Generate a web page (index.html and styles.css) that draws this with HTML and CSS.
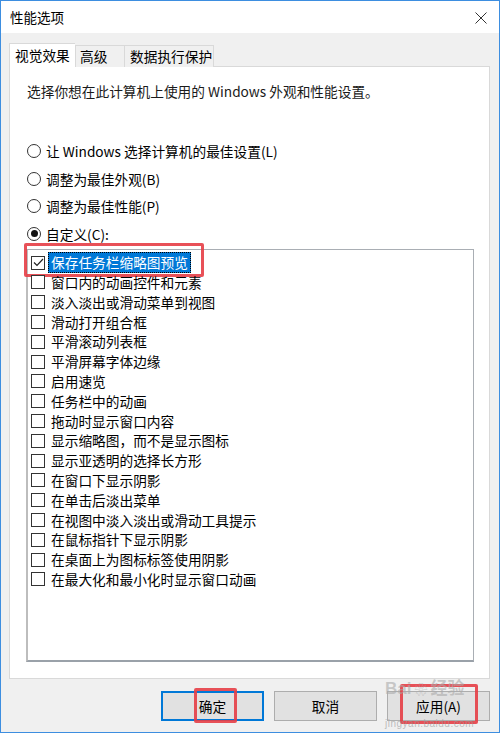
FILE: index.html
```html
<!DOCTYPE html>
<html lang="zh-CN">
<head>
<meta charset="utf-8">
<title>性能选项</title>
<link rel="stylesheet" href="styles.css">
</head>
<body>
<div class="window">
  <div class="titlebar">
    <span class="title">性能选项</span>
    <svg class="close" width="12" height="12" viewBox="0 0 12 12"><path d="M0.5 0.5 L11.5 11.5 M11.5 0.5 L0.5 11.5" stroke="#333" stroke-width="1" fill="none"/></svg>
  </div>
  <div class="body">
    <div class="tabs">
      <div class="tab active">视觉效果</div>
      <div class="tab tab-adv">高级</div>
      <div class="tab tab-dep">数据执行保护</div>
    </div>
    <div class="panel">
      <p class="desc">选择你想在此计算机上使用的 Windows 外观和性能设置。</p>
      <div class="radios">
        <div class="radio-row"><span class="radio"></span><span>让 Windows 选择计算机的最佳设置(L)</span></div>
        <div class="radio-row"><span class="radio"></span><span>调整为最佳外观(B)</span></div>
        <div class="radio-row"><span class="radio"></span><span>调整为最佳性能(P)</span></div>
        <div class="radio-row"><span class="radio on"></span><span>自定义(C):</span></div>
      </div>
      <div class="list">
        <div class="row first"><span class="cb checked"><svg width="11" height="11" viewBox="0 0 11 11"><path d="M1 5.5 L4 8.5 L10 2" stroke="#222" stroke-width="1.2" fill="none"/></svg></span><span class="lbl sel">保存任务栏缩略图预览</span>
          <div class="redbox"></div>
        </div>
        <div class="row"><span class="cb"></span><span class="lbl">窗口内的动画控件和元素</span></div>
        <div class="row"><span class="cb"></span><span class="lbl">淡入淡出或滑动菜单到视图</span></div>
        <div class="row"><span class="cb"></span><span class="lbl">滑动打开组合框</span></div>
        <div class="row"><span class="cb"></span><span class="lbl">平滑滚动列表框</span></div>
        <div class="row"><span class="cb"></span><span class="lbl">平滑屏幕字体边缘</span></div>
        <div class="row"><span class="cb"></span><span class="lbl">启用速览</span></div>
        <div class="row"><span class="cb"></span><span class="lbl">任务栏中的动画</span></div>
        <div class="row"><span class="cb"></span><span class="lbl">拖动时显示窗口内容</span></div>
        <div class="row"><span class="cb"></span><span class="lbl">显示缩略图，而不是显示图标</span></div>
        <div class="row"><span class="cb"></span><span class="lbl">显示亚透明的选择长方形</span></div>
        <div class="row"><span class="cb"></span><span class="lbl">在窗口下显示阴影</span></div>
        <div class="row"><span class="cb"></span><span class="lbl">在单击后淡出菜单</span></div>
        <div class="row"><span class="cb"></span><span class="lbl">在视图中淡入淡出或滑动工具提示</span></div>
        <div class="row"><span class="cb"></span><span class="lbl">在鼠标指针下显示阴影</span></div>
        <div class="row"><span class="cb"></span><span class="lbl">在桌面上为图标标签使用阴影</span></div>
        <div class="row"><span class="cb"></span><span class="lbl">在最大化和最小化时显示窗口动画</span></div>
      </div>
    </div>
    <div class="buttons">
      <button class="btn default">确定<span class="redbox-ok"></span></button>
      <button class="btn">取消</button>
      <button class="btn">应用(A)<span class="redbox-apply"></span></button>
    </div>
  </div>
  <div class="watermark">
    <div class="wm-top">Bai<span class="paw">❀</span>经验</div>
    <div class="wm-bot">jingyan.baidu.com</div>
  </div>
</div>
</body>
</html>
```

FILE: styles.css
```css
* { box-sizing: border-box; }
html, body { margin: 0; padding: 0; }
body {
  width: 500px;
  height: 733px;
  font-family: "Noto Sans CJK SC", "Noto Sans", sans-serif;
  font-size: 13.7px;
  color: #000;
  background: #f0f0f0;
}
.window {
  position: relative;
  width: 500px;
  height: 733px;
  border: 1px solid #3d8ee0;
  background: #f0f0f0;
  display: flex;
  flex-direction: column;
}
.titlebar {
  height: 32px;
  background: #fff;
  display: flex;
  align-items: center;
  justify-content: space-between;
  padding: 0 12px 0 9px;
  flex-shrink: 0;
}
.title { font-size: 13.5px; line-height: 1; margin-top: 1px; }
.close { display: block; margin-top: 1px; }
.body {
  padding: 10px 9px 0 8px;
  display: flex;
  flex-direction: column;
}
.tabs {
  display: flex;
  align-items: flex-end;
  height: 24px;
  position: relative;
  z-index: 2;
  margin-bottom: -1px;
}
.tab {
  height: 22px;
  line-height: 20px;
  border: 1px solid #d9d9d9;
  border-bottom: none;
  background: #f0f0f0;
  padding: 0 5px;
  white-space: nowrap;
}
.tab.active {
  height: 25px;
  background: #fff;
  margin-bottom: -1px;
  line-height: 23px;
  width: 66px;
  border-right: none;
}
.tab-adv { width: 49px; padding-left: 4px; border-right: none; }
.tab-dep { width: 90px; padding-left: 5px; }
.panel {
  height: 613px;
  width: 481px;
  background: #fff;
  border: 1px solid #d9d9d9;
  padding: 0 15px 0 16px;
  display: flex;
  flex-direction: column;
}
.desc {
  margin: 14px 0 0 1px;
  line-height: 20px;
  color: #1a1a1a;
}
.radios { margin-top: 36px; }
.radio-row {
  height: 27.7px;
  display: flex;
  align-items: center;
  margin-left: 1px;
}
.radio {
  width: 14px;
  height: 14px;
  border: 1px solid #333;
  border-radius: 50%;
  margin-right: 5px;
  display: flex;
  align-items: center;
  justify-content: center;
  background: #fff;
}
.radio.on::after {
  content: "";
  width: 7px;
  height: 7px;
  border-radius: 50%;
  background: #111;
}
.list {
  margin-top: 1px;
  height: 413px;
  width: 448px;
  border: 1px solid #a9aeb4;
  border-left: 2px solid #bdbdbd;
  border-bottom: 2px solid #9aa1a9;
  padding: 3px 0 0 3px;
}
.row {
  height: 19.8px;
  display: flex;
  align-items: center;
  position: relative;
}
.cb {
  width: 14px;
  height: 14px;
  border: 1px solid #333;
  background: #fff;
  margin-right: 3px;
  display: flex;
  align-items: center;
  justify-content: center;
}
.cb svg { display: block; }
.lbl {
  line-height: 19px;
  padding: 0 2px;
  border: 1px dotted transparent;
}
.lbl.sel {
  background: #0078d7;
  color: #fff;
  border: 1px dotted #000;
}
.redbox {
  position: absolute;
  left: -7px;
  top: -10px;
  width: 180px;
  height: 34px;
  border: 3px solid rgba(230, 62, 70, 0.9);
  border-radius: 2px;
  pointer-events: none;
}
.buttons {
  display: flex;
  justify-content: flex-end;
  gap: 10px;
  margin-top: 12px;
  padding-right: 0;
}
.btn {
  position: relative;
  width: 103px;
  height: 30px;
  background: #e1e1e1;
  border: 1px solid #adadad;
  font-family: "Noto Sans CJK SC", "Noto Sans", sans-serif;
  font-size: 13.7px;
  line-height: 16px;
  color: #000;
  padding: 0;
  margin: 0;
}
.btn.default { border: 1px solid #0078d7; box-shadow: inset 0 0 0 1px #0078d7; }
.redbox-ok {
  position: absolute;
  left: 32px;
  top: -4px;
  width: 43px;
  height: 35px;
  border: 3px solid rgba(230, 62, 70, 0.9);
  border-radius: 2px;
}
.redbox-apply {
  position: absolute;
  left: 12px;
  top: -8px;
  width: 78px;
  height: 40px;
  border: 3px solid rgba(230, 62, 70, 0.9);
  border-radius: 2px;
}
.watermark {
  position: absolute;
  left: 384px;
  top: 679px;
  color: rgba(170, 170, 170, 0.6);
  pointer-events: none;
  font-family: "Liberation Sans", "Noto Sans CJK SC", sans-serif;
}
.wm-top { font-size: 17px; font-weight: bold; line-height: 17px; height: 17px; white-space: nowrap; }
.paw { font-size: 13px; margin: 0 3px; }
.wm-bot { font-size: 10px; line-height: 10px; margin-top: 22px; letter-spacing: 0.5px; color: rgba(150, 150, 150, 0.6); }
```
